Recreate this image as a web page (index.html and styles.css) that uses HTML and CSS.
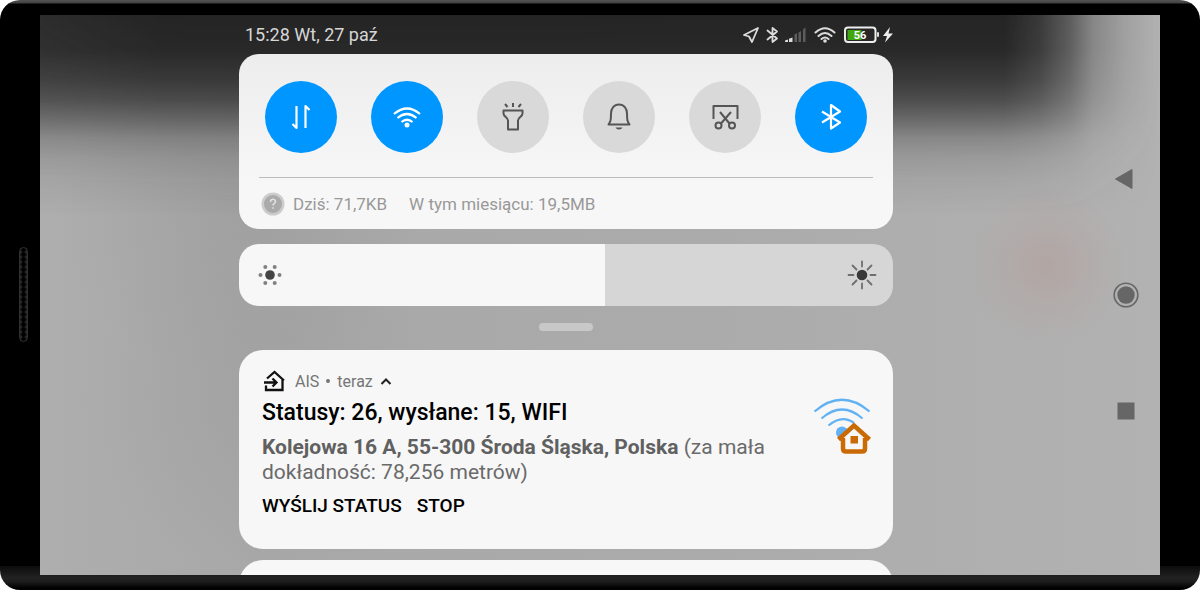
FILE: index.html
```html
<!DOCTYPE html>
<html lang="pl">
<head>
<meta charset="utf-8">
<meta name="viewport" content="width=device-width, initial-scale=1">
<title>AIS</title>
<link rel="stylesheet" href="styles.css">
</head>
<body>
<div class="phone">
  <div class="speaker"></div>
  <div class="screen">
    <main class="shade">
      <header class="status">
        <time class="clock">15:28 Wt, 27 paź</time>
        <svg class="status-icons" width="154" height="20" viewBox="739 25 154 20" fill="none" stroke="#dcdcdc" stroke-width="1.8" stroke-linejoin="round" stroke-linecap="round">
          <path d="M758 28 L744 35 L749 36.500 L752 42 Z"/>
          <path d="M767.500 30.500L777 38.500 L772.500 42 V28 L777 31.500 L767.500 39.500"/>
          <g stroke="none" fill="#dcdcdc">
            <path d="M785 42 V40.500 L788 39.500 V42Z M789 42 V38.800 L792.500 37.500 V42Z"/>
            <path opacity=".3" d="M794.500 42v-7.500l2.500-1.500v9z M798.500 42V32.500l2.500-1.500v11z M803 42V29.500l2.500-2v14.500z"/>
          </g>
          <path stroke-width="2" d="M815.500 32.500 Q825 24 834.500 32.500 M818.500 36 Q825 30 831.500 36 M821.500 39 Q825 36 828.500 39"/>
          <circle cx="825" cy="41" r="1.800" fill="#dcdcdc" stroke="none"/>
          <rect x="847.500" y="30" width="14" height="10" fill="#3fa80f" stroke="none"/>
          <rect x="845" y="27.500" width="30.500" height="14.500" rx="3" stroke-width="2" stroke="#eee"/>
          <path d="M878 33v3" stroke-width="2"/>
          <text class="battery" x="860" y="39">56</text>
          <path stroke="none" fill="#eee" d="M890 27 L883 36 H887 L885 42.500 L893 33.500 H888.500Z"/>
        </svg>
      </header>

      <section class="card quick">
        <div class="toggles">
          <button class="toggle on" aria-label="Dane mobilne"><svg viewBox="0 0 72 72"><path d="M31.500 25v22l-4-4M40.500 47V25l4 4" /></svg></button>
          <button class="toggle on" aria-label="Wi-Fi"><svg viewBox="0 0 72 72"><path d="M23 33Q36 22 49 33M26.500 37Q36 29 45.500 37M30.500 41Q36 36.500 41.500 41"/><circle cx="36" cy="44" r="2.500" fill="#fff" stroke="none"/></svg></button>
          <button class="toggle" aria-label="Latarka"><svg viewBox="0 0 72 72"><path d="M26.500 29.500h19v3c0 3-4.500 4-4.500 7v9H31v-9c0-3-4.500-4-4.500-7zM36 22v4M28 23l2.500 3M44 23l-2.500 3"/></svg></button>
          <button class="toggle" aria-label="Dzwonek"><svg viewBox="0 0 72 72"><path d="M25.500 43.500c2-3 2.500-4 2.500-11 0-5 3-9 8-9s8 4 8 9c0 7 .5 8 2.500 11z"/><path d="M32.500 46.500h7c-1 2.500-6 2.500-7 0z" fill="#555" stroke="none"/></svg></button>
          <button class="toggle" aria-label="Zrzut ekranu"><svg viewBox="0 0 72 72"><path d="M24.500 38V25h24V38M31 31l9.500 11.500M42 31L32 42.500"/><circle cx="29.500" cy="44.500" r="3"/><circle cx="43" cy="44.500" r="3"/></svg></button>
          <button class="toggle on" aria-label="Bluetooth"><svg viewBox="0 0 72 72"><path d="M27 30.500L45 41.500l-9 6V24l9 6.500L27 41.500"/></svg></button>
        </div>
        <div class="usage">
          <svg width="24" height="24" viewBox="0 0 24 24"><circle cx="12" cy="12" r="11.500" fill="#ccc"/><circle cx="12" cy="12" r="9" fill="#aaa"/><path d="M9.500 10c0-3.500 5-3.500 5-.5 0 2-2.500 1.800-2.500 4M12 15.200v1.500" fill="none" stroke="#e2e2e2" stroke-width="1.500"/></svg>
          <span>Dziś: 71,7KB</span>
          <span class="month">W tym miesiącu: 19,5MB</span>
        </div>
      </section>

      <div class="brightness">
        <input type="range" min="0" max="100" value="56" aria-label="Jasność">
        <svg class="dim" width="24" height="24" viewBox="0 0 24 24" fill="#808080"><circle cx="12" cy="12" r="4.800" fill="#444"/><circle cx="2.500" cy="12" r="2"/><circle cx="21.500" cy="12" r="2"/><circle cx="7.300" cy="4" r="2"/><circle cx="16.700" cy="4" r="2"/><circle cx="7.300" cy="20" r="2"/><circle cx="16.700" cy="20" r="2"/></svg>
        <svg class="bright" width="30" height="30" viewBox="0 0 30 30" stroke="#6e6e6e" stroke-width="1.800" stroke-linecap="round"><circle cx="15" cy="15" r="5.300" fill="#3a3a3a" stroke="none"/><path d="M15 1.500v5M15 23.500v5M1.500 15h5M23.500 15h5M5.500 5.500l4 4M20.500 20.500l4 4M24.500 5.500l-4 4M9.500 20.500l-4 4"/></svg>
      </div>

      <div class="handle"></div>

      <article class="card note">
        <div class="note-text">
          <div class="note-head">
            <svg width="24" height="24" viewBox="0 0 24 24" fill="none" stroke="#111" stroke-width="2.300"><path d="M5 9.500L12.500 3l9.500 8.500M20.500 10v11H4v-4.500"/><path d="M2 13.500h12M10.500 9.500l4 4-4 4"/></svg>
            <span>AIS</span><span class="dot"></span><span>teraz</span>
            <svg class="chevron" width="12" height="12" viewBox="0 0 12 12" fill="none" stroke="#222" stroke-width="2"><path d="M1.500 9L6 4.500 10.500 9"/></svg>
          </div>
          <h1 class="title">Statusy: 26, wysłane: 15, WIFI</h1>
          <p class="address"><b>Kolejowa 16 A, 55-300 Środa Śląska, Polska</b> (za mała dokładność: 78,256 metrów)</p>
          <div class="actions"><button>WYŚLIJ STATUS</button><button>STOP</button></div>
        </div>
        <svg class="home" width="60" height="60" viewBox="0 0 60 60" fill="none">
          <g stroke="#62b1f3" stroke-width="2.200"><path d="M3.500 14.500Q31 -9 58.500 14.500M10.500 21.500Q31 3.500 51.500 21.500M17.500 28.500Q31 17 43 26"/></g>
          <circle cx="31" cy="35.500" r="6" fill="#62b1f3"/>
          <path d="M43 27.500L27 41.500h5V53q0 2.500 2.500 2.500h17q2.500 0 2.500-2.500V41.500h5z" fill="#f7f7f7"/>
          <path d="M27.500 42.500L43 28.500l15.500 14M32 41v10.500q0 3 3 3h16q3 0 3-3V41" stroke="#c96a05" stroke-width="4.500"/>
          <rect x="39.500" y="39" width="7.500" height="7.500" fill="#c96a05"/>
        </svg>
      </article>
      <div class="card next"></div>
    </main>
    <nav class="nav">
      <button aria-label="Wstecz"><svg width="28" height="28" viewBox="0 0 28 28"><path d="M3.500 14L20 4.500v19z" fill="#666" stroke="#666" stroke-linejoin="round"/></svg></button>
      <button aria-label="Ekran główny"><svg width="28" height="28" viewBox="0 0 28 28"><circle cx="14" cy="14" r="11.800" fill="none" stroke="#666" stroke-width="1.600"/><circle cx="14" cy="14" r="8.700" fill="#666"/></svg></button>
      <button aria-label="Ostatnie"><svg width="28" height="28" viewBox="0 0 28 28"><rect x="5.500" y="5.500" width="17" height="17" fill="#666"/></svg></button>
    </nav>
  </div>
</div>
</body>
</html>
```
FILE: styles.css
```css
* { box-sizing: border-box; }
body { margin: 0; background: #fff; font-family: Roboto, "Liberation Sans", sans-serif; }
button { border: 0; padding: 0; background: none; color: inherit; font: inherit; cursor: pointer; }
svg { display: block; flex: none; }

.phone {
  position: relative;
  display: flex;
  min-height: 100vh;
  padding: 15px 40px;
  border-radius: 20px;
  background:
    linear-gradient(#555, #404040 3px, #000 4px) top / 100% 5px no-repeat,
    linear-gradient(#0c0c0c, #222 12px, #1c1c1c 16px, #000 22px) bottom / 100% 24px no-repeat,
    #000;
}
.speaker {
  position: absolute;
  left: 19px;
  top: 50%;
  width: 9px;
  height: 95px;
  margin-top: -48px;
  border: 1px solid #303030;
  border-radius: 5px;
  background: radial-gradient(circle, #000 2px, #2c2c2c 3px) center / 6px 5px;
}
.screen {
  position: relative;
  isolation: isolate;
  display: flex;
  flex: 1;
  overflow: hidden;
  background:
    radial-gradient(circle 80px at 1007px 250px, rgba(180, 150, 143, .42), rgba(180, 155, 150, .25) 45%, transparent),
    radial-gradient(circle 180px at 220px 380px, rgba(150, 150, 150, .35), transparent),
    radial-gradient(circle 180px at 200px 190px, rgba(145, 145, 145, .35), transparent),
    linear-gradient(90deg, #aeaeae, #a8a8a8 20%, #ababab 60%, #b2b2b2);
}
.screen::before {
  content: "";
  position: absolute;
  inset: 0;
  z-index: -1;
  background: #242424;
  mask-image:
    linear-gradient(#000, rgba(0, 0, 0, .97) 35px, rgba(0, 0, 0, .84) 65px, rgba(0, 0, 0, .7) 85px, rgba(0, 0, 0, .5) 104px, rgba(0, 0, 0, .28) 123px, rgba(0, 0, 0, .15) 143px, rgba(0, 0, 0, .07) 165px, transparent 200px),
    linear-gradient(90deg, rgba(0, 0, 0, .94), #000 120px, #000 calc(100% - 155px), rgba(0, 0, 0, .85) calc(100% - 120px), rgba(0, 0, 0, .6) calc(100% - 90px), rgba(0, 0, 0, .3) calc(100% - 67px), rgba(0, 0, 0, .12) calc(100% - 35px), transparent);
  mask-composite: intersect;
}
.shade {
  display: flex;
  flex: 1;
  flex-direction: column;
  width: 100%;
  max-width: 654px;
  margin: 0 auto;
}
.nav {
  display: flex;
  flex: none;
  flex-direction: column;
  align-items: center;
  justify-content: center;
  gap: 88px;
  width: 68px;
}

.status {
  display: flex;
  align-items: center;
  justify-content: space-between;
  height: 39px;
  padding-left: 6px;
  color: #d6d6d6;
  font-size: 18px;
}
.battery { fill: #fff; stroke: none; font-size: 11px; font-weight: 700; text-anchor: middle; }

.card { border-radius: 24px; background: #f7f7f7; }
.quick {
  padding: 27px 20px 0;
  border-radius: 20px;
  background: linear-gradient(#ededed, #f7f7f7 75%);
}
.toggles { display: flex; justify-content: space-between; padding: 0 6px 24px; border-bottom: 1px solid #bbb; }
.toggle { width: 72px; height: 72px; border-radius: 50%; background: #d9d9d9; }
.toggle svg { fill: none; stroke: #555; stroke-width: 2px; stroke-linejoin: round; }
.toggle.on { background: #0096ff; }
.toggle.on svg { stroke: #fff; stroke-width: 2.2px; }
.usage { display: flex; align-items: center; gap: 8px; height: 51px; padding-left: 2px; color: #999; font-size: 17px; }
.month { margin-left: 14px; }

.brightness { position: relative; margin-top: 15px; }
.brightness input {
  appearance: none;
  display: block;
  width: 100%;
  height: 62px;
  margin: 0;
  border-radius: 20px;
  background: linear-gradient(90deg, #f7f7f7 56%, #d6d6d6 56%);
}
.brightness input::-webkit-slider-thumb { appearance: none; width: 1px; height: 62px; }
.brightness svg { position: absolute; top: 50%; transform: translateY(-50%); pointer-events: none; }
.dim { left: 19px; }
.bright { right: 16px; }
.handle { width: 54px; height: 8px; margin: 17px auto 19px; border-radius: 4px; background: #c8c8c8; }

.note { display: flex; justify-content: space-between; min-height: 199px; padding: 19px 22px 28px 23px; }
.note-text { flex: 1; max-width: 520px; }
.note-head { display: flex; align-items: center; height: 24px; gap: 9px; color: #757575; font-size: 16px; }
.dot { width: 4px; height: 4px; margin: 0 -2px; border-radius: 50%; background: #757575; }
.chevron { margin-left: -2px; }
.title { margin: 5px 0 7px; color: #000; font-size: 23px; font-weight: 500; line-height: 30px; }
.address { margin: 0; color: #6a6a6a; font-size: 21px; line-height: 25px; }
.address b { color: #606060; font-weight: 700; }
.actions { display: flex; gap: 15px; margin-top: 9px; color: #000; font-size: 19px; font-weight: 500; line-height: 24px; }
.home { margin-top: 28px; }
.next { flex: 1; min-height: 40px; margin: 11px 0 -25px; border-radius: 24px 24px 0 0; }
```
